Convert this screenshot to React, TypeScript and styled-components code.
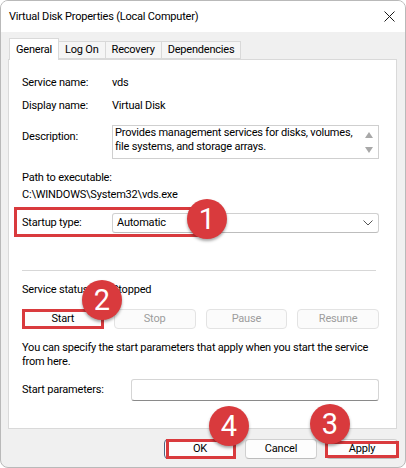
import React from "react";
import styled, { createGlobalStyle } from "styled-components";

const Global = createGlobalStyle`
  html, body { margin: 0; padding: 0; background: #ffffff; }
  body {
    font-family: "Segoe UI", Roboto, "Noto Sans", sans-serif;
    font-size: 11px;
    letter-spacing: -0.2px;
    color: #000;
  }
  * { box-sizing: border-box; }
`;

const RED = "#d93a3d";

const Window = styled.div`
  width: 406px;
  height: 468px;
  border: 1px solid #b9b9b9;
  border-radius: 8px;
  overflow: hidden;
  display: flex;
  flex-direction: column;
  background: #f0f0f0;
`;

const TitleBar = styled.div`
  height: 31px;
  background: #ffffff;
  display: flex;
  align-items: center;
  justify-content: space-between;
  padding: 0 10px 0 8px;
  flex: none;
`;

const Title = styled.span`
  font-size: 11px;
  line-height: 16px;
`;

const Body = styled.div`
  flex: 1;
  min-height: 0;
  display: flex;
  flex-direction: column;
  padding: 0 8px 8px 7px;
`;

const TabStrip = styled.div`
  display: flex;
  align-items: flex-end;
  height: 22px;
  margin-top: 6px;
  margin-bottom: -1px;
  padding-left: 1px;
  position: relative;
  z-index: 1;
  flex: none;
`;

const Tab = styled.div<{ $active?: boolean }>`
  height: ${(p) => (p.$active ? "22px" : "18px")};
  margin-bottom: ${(p) => (p.$active ? "0" : "1px")};
  margin-left: ${(p) => (p.$active ? "0" : "-1px")};
  padding: ${(p) => (p.$active ? "1px 6px 0" : "0 6px")};
  border: 1px solid #d9d9d9;
  border-bottom: ${(p) => (p.$active ? "none" : "1px solid #d9d9d9")};
  background: ${(p) => (p.$active ? "#ffffff" : "#f5f5f5")};
  display: flex;
  align-items: center;
  line-height: 16px;
  &:first-child { margin-left: 0; }
`;

const Panel = styled.div`
  flex: 1;
  min-height: 0;
  background: #ffffff;
  border: 1px solid #d9d9d9;
  padding: 15px 17px 0 13px;
  display: flex;
  flex-direction: column;
`;

const InfoRow = styled.div<{ $gap?: number }>`
  display: grid;
  grid-template-columns: 90px 1fr;
  align-items: start;
  margin-top: ${(p) => p.$gap ?? 0}px;
  line-height: 16px;
  position: relative;
`;

const Label = styled.span<{ $pad?: number }>`
  line-height: 16px;
  padding-top: ${(p) => p.$pad ?? 0}px;
  white-space: nowrap;
`;

const Value = styled.span`
  line-height: 16px;
`;

const TextBlock = styled.div<{ $gap?: number }>`
  margin-top: ${(p) => p.$gap ?? 0}px;
  line-height: 16px;
`;

const DescBox = styled.div`
  height: 34px;
  border: 1px solid #cfcfcf;
  background: #ffffff;
  padding: 0 20px 0 2px;
  line-height: 14px;
  position: relative;
`;

const ScrollArrows = styled.div`
  position: absolute;
  right: 5px;
  top: 6px;
  bottom: 5px;
  display: flex;
  flex-direction: column;
  justify-content: space-between;
`;

const Combo = styled.div`
  height: 20px;
  border: 1px solid #d0d0d0;
  border-bottom-color: #bdbdbd;
  border-radius: 3px;
  background: #fff;
  display: flex;
  align-items: center;
  justify-content: space-between;
  padding: 0 5px 0 4px;
`;

const Separator = styled.div`
  margin-top: 37px;
  margin-right: 3px;
  height: 2px;
  border-top: 1px solid #d7d7d7;
  border-bottom: 1px solid #ffffff;
`;

const ButtonGrid = styled.div`
  margin-top: 11px;
  display: grid;
  grid-template-columns: repeat(4, 1fr);
  column-gap: 10px;
`;

const Button = styled.div<{ $disabled?: boolean; $default?: boolean }>`
  position: relative;
  height: 20px;
  border: 1px solid ${(p) => (p.$disabled ? "#e3e3e3" : p.$default ? "#4d6582" : "#d0d0d0")};
  border-bottom-color: ${(p) => (p.$disabled ? "#e3e3e3" : p.$default ? "#4d6582" : "#bcbcbc")};
  border-radius: 4px;
  background: ${(p) => (p.$disabled ? "#fbfbfb" : "#fdfdfd")};
  color: ${(p) => (p.$disabled ? "#9d9d9d" : "#000")};
  display: flex;
  align-items: center;
  justify-content: center;
  line-height: 16px;
`;

const FooterButton = styled(Button)`
  width: 72px;
`;

const Note = styled.div`
  margin-top: 12px;
  line-height: 14px;
  white-space: nowrap;
`;

const ParamRow = styled.div`
  margin-top: 10px;
  display: grid;
  grid-template-columns: 109px 1fr;
  align-items: center;
`;

const TextInput = styled.div`
  height: 22px;
  border: 1px solid #d5d5d5;
  border-bottom-color: #8a8a8a;
  border-radius: 3px;
  background: #fff;
`;

const Footer = styled.div`
  flex: none;
  display: flex;
  justify-content: flex-end;
  gap: 9px;
  margin-top: 10px;
  margin-right: -1px;
`;

const Outline = styled.div<{ $t: number; $r: number; $b: number; $l: number }>`
  position: absolute;
  top: ${(p) => p.$t}px;
  right: ${(p) => p.$r}px;
  bottom: ${(p) => p.$b}px;
  left: ${(p) => p.$l}px;
  border: 3px solid ${RED};
  pointer-events: none;
`;

const Badge = styled.div<{ $x: number; $y: number }>`
  position: absolute;
  left: ${(p) => p.$x - 20}px;
  top: ${(p) => p.$y - 20}px;
  width: 40px;
  height: 40px;
  border-radius: 50%;
  background: ${RED};
  box-shadow: 0 2px 3px rgba(0, 0, 0, 0.35);
  color: #ffffff;
  font-family: "Segoe UI", Roboto, sans-serif;
  font-size: 29px;
  letter-spacing: 0;
  line-height: 40px;
  text-align: center;
  z-index: 5;
`;

const CloseIcon = () => (
  <svg width="11" height="11" viewBox="0 0 11 11">
    <path d="M0.5 0.5 L10.5 10.5 M10.5 0.5 L0.5 10.5" stroke="#1a1a1a" strokeWidth="1" fill="none" />
  </svg>
);

const Chevron = () => (
  <svg width="10" height="6" viewBox="0 0 10 6">
    <path d="M0.5 0.5 L5 5 L9.5 0.5" stroke="#555" strokeWidth="1" fill="none" />
  </svg>
);

const Tri = ({ up }: { up?: boolean }) => (
  <svg width="8" height="6" viewBox="0 0 8 6">
    <path d={up ? "M0 6 L4 0 L8 6 Z" : "M0 0 L8 0 L4 6 Z"} fill="#a8a8a8" />
  </svg>
);

export default function App() {
  return (
    <>
      <Global />
      <Window>
        <TitleBar>
          <Title>Virtual Disk Properties (Local Computer)</Title>
          <CloseIcon />
        </TitleBar>
        <Body>
          <TabStrip>
            <Tab $active>General</Tab>
            <Tab>Log On</Tab>
            <Tab>Recovery</Tab>
            <Tab>Dependencies</Tab>
          </TabStrip>
          <Panel>
            <InfoRow>
              <Label>Service name:</Label>
              <Value>vds</Value>
            </InfoRow>
            <InfoRow $gap={7}>
              <Label>Display name:</Label>
              <Value>Virtual Disk</Value>
            </InfoRow>
            <InfoRow $gap={11}>
              <Label $pad={4}>Description:</Label>
              <DescBox>
                Provides management services for disks, volumes,
                <br />
                file systems, and storage arrays.
                <ScrollArrows>
                  <Tri up />
                  <Tri />
                </ScrollArrows>
              </DescBox>
            </InfoRow>
            <TextBlock $gap={11}>Path to executable:</TextBlock>
            <TextBlock $gap={1}>C:\WINDOWS\System32\vds.exe</TextBlock>
            <InfoRow $gap={10}>
              <Label $pad={2}>Startup type:</Label>
              <Combo>
                <span>Automatic</span>
                <Chevron />
              </Combo>
              <Outline $t={-6} $r={178} $b={-4} $l={-8} />
              <Badge $x={185} $y={6}>1</Badge>
            </InfoRow>
            <Separator />
            <InfoRow $gap={10}>
              <Label>Service status:</Label>
              <Value>Stopped</Value>
            </InfoRow>
            <ButtonGrid>
              <Button>
                Start
                <Outline $t={-1} $r={-1} $b={-1} $l={-1} />
                <Badge $x={79} $y={-10}>2</Badge>
              </Button>
              <Button $disabled>Stop</Button>
              <Button $disabled>Pause</Button>
              <Button $disabled>Resume</Button>
            </ButtonGrid>
            <Note>
              You can specify the start parameters that apply when you start the service
              <br />
              from here.
            </Note>
            <ParamRow>
              <Label>Start parameters:</Label>
              <TextInput />
            </ParamRow>
          </Panel>
          <Footer>
            <FooterButton $default>
              OK
              <Outline $t={-1} $r={-1} $b={-1} $l={1} />
              <Badge $x={64} $y={-14}>4</Badge>
            </FooterButton>
            <FooterButton>Cancel</FooterButton>
            <FooterButton>
              Apply
              <Outline $t={1} $r={-2} $b={0} $l={-2} />
              <Badge $x={3} $y={-16}>3</Badge>
            </FooterButton>
          </Footer>
        </Body>
      </Window>
    </>
  );
}
